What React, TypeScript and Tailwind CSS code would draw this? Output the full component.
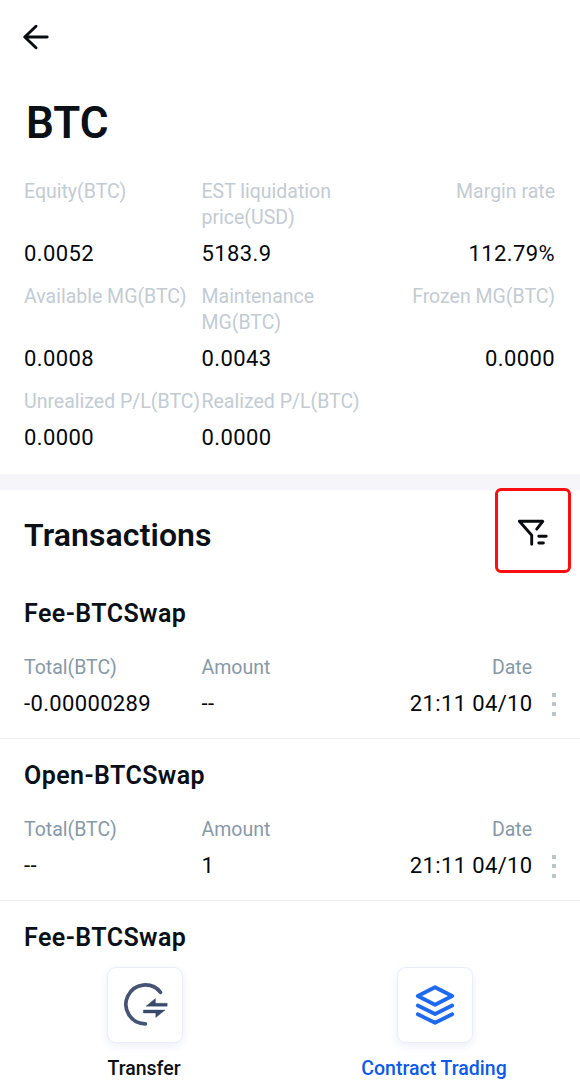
type Stat = { label: string[]; value: string };

const stats: Stat[][] = [
  [
    { label: ["Equity(BTC)"], value: "0.0052" },
    { label: ["EST liquidation", "price(USD)"], value: "5183.9" },
    { label: ["Margin rate"], value: "112.79%" },
  ],
  [
    { label: ["Available MG(BTC)"], value: "0.0008" },
    { label: ["Maintenance", "MG(BTC)"], value: "0.0043" },
    { label: ["Frozen MG(BTC)"], value: "0.0000" },
  ],
  [
    { label: ["Unrealized P/L(BTC)"], value: "0.0000" },
    { label: ["Realized P/L(BTC)"], value: "0.0000" },
  ],
];

const transactions = [
  { title: "Fee-BTCSwap", total: "-0.00000289", amount: "--", date: "21:11 04/10" },
  { title: "Open-BTCSwap", total: "--", amount: "1", date: "21:11 04/10" },
];

function StatCell({ label, value, right }: Stat & { right: boolean }) {
  return (
    <div className={right ? "flex flex-col justify-between text-right" : "flex flex-col justify-between"}>
      <div className="text-[19.5px] leading-[26px] whitespace-nowrap text-[#c3cbd3]">
        {label.map((line) => (
          <div key={line}>{line}</div>
        ))}
      </div>
      <div className="mt-1.5 text-[22px] leading-[34px] tracking-[0.4px] text-[#05080d]">{value}</div>
    </div>
  );
}

function Transaction({ title, total, amount, date }: (typeof transactions)[number]) {
  return (
    <article className="h-[162px] shrink-0 border-b border-[#ededf3] pl-6">
      <h3 className="pt-5 text-[25px] leading-[34px] font-semibold tracking-[0.42px]">{title}</h3>
      <div className="mt-6 grid grid-cols-[177.5px_1fr_auto_48px] text-[19.5px] leading-[26px] text-[#8799a8]">
        <span>Total(BTC)</span>
        <span>Amount</span>
        <span>Date</span>
      </div>
      <div className="mt-1.5 grid grid-cols-[177.5px_1fr_auto_47.5px] text-[22px] leading-[34px] tracking-[0.35px] text-[#05080d]">
        <span>{total}</span>
        <span>{amount}</span>
        <span>{date}</span>
        <span className="flex flex-col items-center justify-center gap-[5.5px] pr-[5px]">
          <i className="size-1 bg-[#bcc4cc]" />
          <i className="size-1 bg-[#bcc4cc]" />
          <i className="size-1 bg-[#bcc4cc]" />
        </span>
      </div>
    </article>
  );
}

export default function App() {
  return (
    <main className="flex h-[1088px] w-[580px] flex-col overflow-hidden bg-white font-['Roboto',sans-serif] text-[#0b1017]">
      <header className="h-[179px] shrink-0">
        <svg className="mt-6 ml-[23px]" width="26" height="26" viewBox="0 0 26 26" fill="none" stroke="#080b10" strokeWidth="2.9" strokeLinecap="round" strokeLinejoin="round">
          <path d="M13 2.2 1.8 13 13 23.8M1.8 13h22.4" />
        </svg>
        <h1 className="mt-[46px] ml-[26px] text-[44px] leading-[54px] font-semibold">BTC</h1>
      </header>

      <section className="h-[295px] shrink-0 pr-[25px] pl-6">
        {stats.map((row, i) => (
          <div key={i} className="mb-[13px] grid grid-cols-[177.5px_177px_1fr]">
            {row.map((s, j) => (
              <StatCell key={j} {...s} right={j === 2} />
            ))}
          </div>
        ))}
      </section>
      <div className="h-4 shrink-0 bg-[#f5f5fa]" />

      <section className="relative flex h-[87px] shrink-0 items-start pl-6">
        <h2 className="pt-[25px] text-[32px] leading-[40px] font-semibold tracking-[0.1px]">Transactions</h2>
        <button aria-label="Filter" className="absolute top-[-2.5px] left-[495px] flex h-[85px] w-[75.5px] items-start rounded-[6px] border-3 border-[#fc0d10] pt-[27.5px] pl-[19px]">
          <svg className="shrink-0" width="32" height="32" viewBox="0 0 32 32" fill="none" stroke="#080b10" strokeWidth="2.9" strokeLinecap="round" strokeLinejoin="round">
            <path d="M19.7 11.2 25.8 3.3H2.4L14.7 17.3v9M21.8 18.3h7.4M21.8 25h4.6" />
          </svg>
        </button>
      </section>

      <section className="flex min-h-0 flex-1 flex-col overflow-hidden">
        {transactions.map((t, i) => (
          <Transaction key={i} {...t} />
        ))}
        <h3 className="pt-5 pl-6 text-[25px] leading-[34px] font-semibold tracking-[0.42px]">Fee-BTCSwap</h3>
      </section>

      <nav className="grid h-[131px] shrink-0 grid-cols-2 bg-white">
        <a className="flex flex-col items-center text-[19.5px] leading-[26px] font-medium">
          <span className="mt-[10px] flex size-[76px] items-center justify-center rounded-[9px] border border-[#eaeefa] bg-white shadow-[0_3px_8px_rgba(60,80,180,0.09)]">
            <svg width="46" height="46" viewBox="0 0 46 46">
              <path d="M38.5 10.3A19.4 19.4 0 1 0 23.4 41.8" fill="none" stroke="#455475" strokeWidth="3.7" strokeLinecap="round" />
              <path d="M24 24.2 33.4 16.5V21.2H45.2V24.2ZM21.3 28H43L33.8 35.6V31H21.3Z" fill="#3a4969" stroke="#3a4969" strokeWidth=".4" strokeLinejoin="round" />
            </svg>
          </span>
          <span className="mt-[13px] pr-0.5">Transfer</span>
        </a>
        <a className="flex flex-col items-center text-[19.5px] leading-[26px] font-medium text-[#0d59e8]">
          <span className="mt-[10px] flex size-[76px] items-center justify-center rounded-[9px] border border-[#eaeefa] bg-white shadow-[0_3px_8px_rgba(60,80,180,0.09)]">
            <svg width="42" height="42" viewBox="0 0 42 42" fill="none" stroke="#1f69ef" strokeWidth="3.8" strokeLinecap="round" strokeLinejoin="round">
              <path d="M21 3.2 38.2 12 21 20.8 3.8 12ZM3.8 21.5 21 30l17.2-8.5M3.8 30.3 21 38.8l17.2-8.5" />
            </svg>
          </span>
          <span className="mt-[13px] pr-0.5">Contract Trading</span>
        </a>
      </nav>
    </main>
  );
}
